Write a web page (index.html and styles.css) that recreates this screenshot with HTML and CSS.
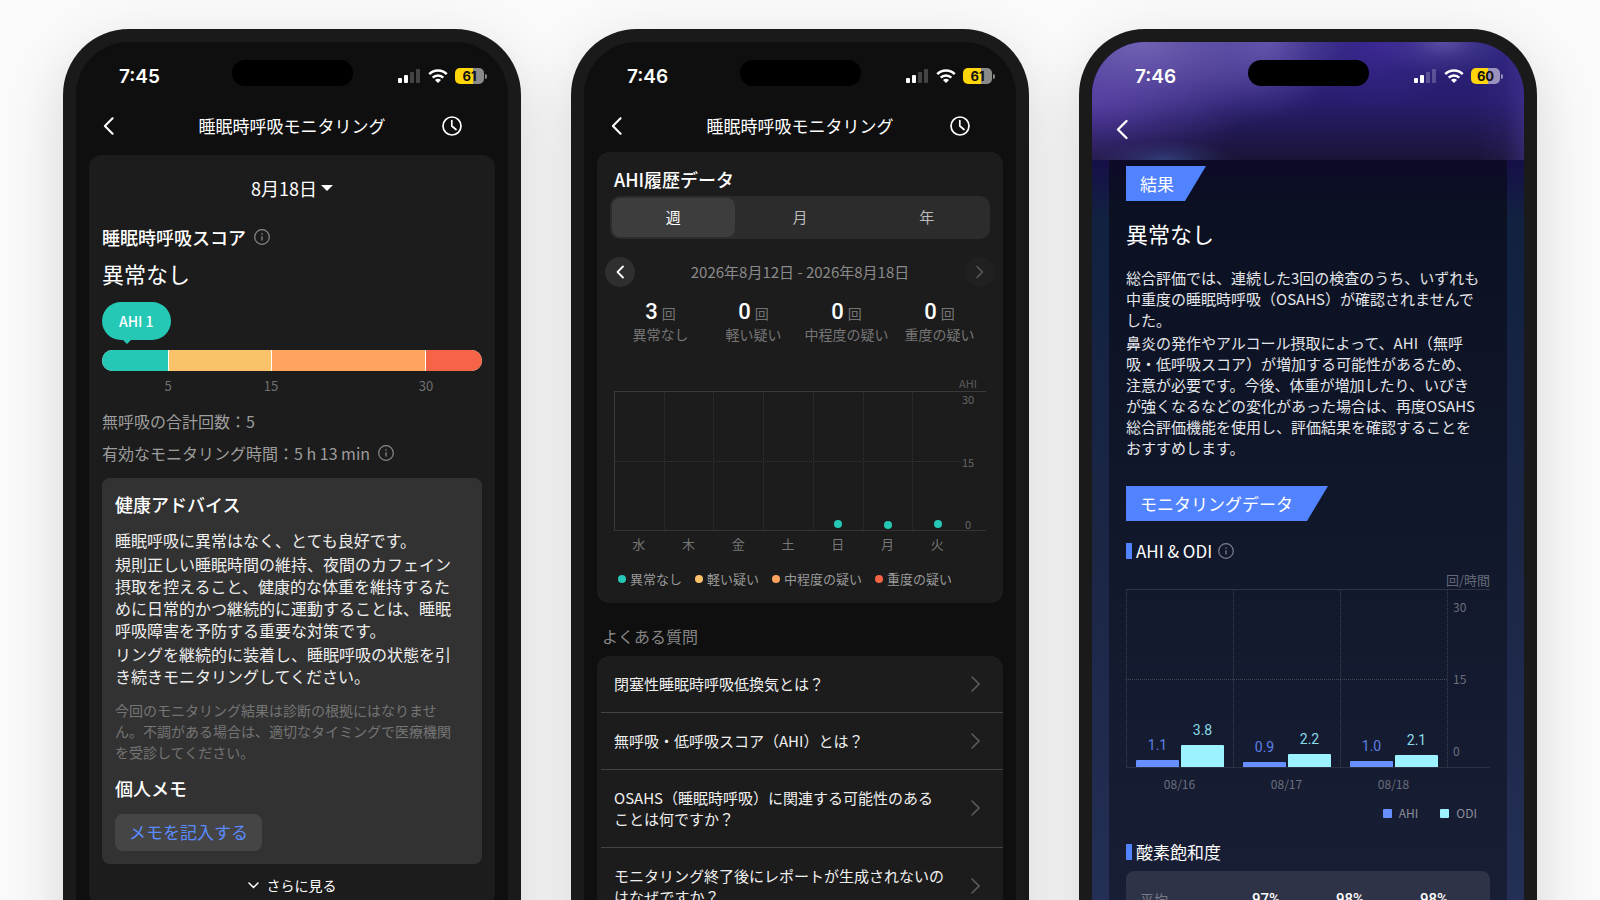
FILE: index.html
```html
<!DOCTYPE html>
<html lang="ja">
<head>
<meta charset="utf-8">
<meta name="viewport" content="width=device-width, initial-scale=1">
<title>睡眠時呼吸モニタリング</title>
<link rel="stylesheet" href="styles.css">
</head>
<body>
<svg class="defs" width="0" height="0" aria-hidden="true">
  <symbol id="signal" viewBox="0 0 23 14">
    <rect x="0" y="9" width="4" height="5" rx="1" fill="#fff"/>
    <rect x="6" y="6" width="4" height="8" rx="1" fill="#fff"/>
    <rect x="12" y="3" width="4" height="11" rx="1" fill="#fff" opacity=".22"/>
    <rect x="18" y="0" width="4" height="14" rx="1" fill="#fff" opacity=".22"/>
  </symbol>
  <symbol id="wifi" viewBox="0 0 20 14">
    <path d="M1.300 5.100a12.300 12.300 0 0 1 17.400 0" fill="none" stroke="#fff" stroke-width="2.700"/>
    <path d="M4.700 8.700a7.500 7.500 0 0 1 10.600 0" fill="none" stroke="#fff" stroke-width="2.600"/>
    <path d="M10 14l-3-3a4.200 4.200 0 0 1 6 0z" fill="#fff"/>
  </symbol>
  <symbol id="back" viewBox="0 0 12 20">
    <path d="M10.500 1.500L2 10l8.500 8.500" fill="none" stroke="currentColor" stroke-width="2.300" stroke-linecap="round" stroke-linejoin="round"/>
  </symbol>
  <symbol id="clock" viewBox="0 0 20 20">
    <circle cx="10" cy="10" r="9" fill="none" stroke="currentColor" stroke-width="1.700"/>
    <path d="M9.800 4.500v5.500l4.200 3.500" fill="none" stroke="currentColor" stroke-width="1.700" stroke-linecap="round" stroke-linejoin="round"/>
  </symbol>
  <symbol id="info" viewBox="0 0 16 16">
    <circle cx="8" cy="8" r="7.300" fill="none" stroke="currentColor" stroke-width="1.200"/>
    <path d="M8 7.200v4.300M8 4.300v1.400" stroke="currentColor" stroke-width="1.300"/>
  </symbol>
  <symbol id="next" viewBox="0 0 9 16">
    <path d="M1 1l7 7-7 7" fill="none" stroke="currentColor" stroke-width="1.600" stroke-linecap="round"/>
  </symbol>
</svg>

<main class="stage">
  <section class="phone">
    <div class="screen">
      <div class="status">
        <span class="time">7:45</span><span class="island"></span>
        <span class="status-icons">
          <svg class="signal"><use href="#signal"/></svg>
          <svg class="wifi"><use href="#wifi"/></svg>
          <span class="battery"><span class="level">61</span></span>
        </span>
      </div>
      <header class="nav">
        <button class="icon-btn" aria-label="戻る"><svg class="back"><use href="#back"/></svg></button>
        <h1>睡眠時呼吸モニタリング</h1>
        <button class="icon-btn end" aria-label="履歴"><svg class="clock"><use href="#clock"/></svg></button>
      </header>

      <div class="card score">
        <button class="date">8月18日<span class="caret"></span></button>
        <h2 class="score-title">睡眠時呼吸スコア<svg class="info"><use href="#info"/></svg></h2>
        <p class="verdict">異常なし</p>
        <span class="bubble">AHI 1</span>
        <div class="scale">
          <span class="ok"></span><span class="mild"></span><span class="mid"></span><span class="severe"></span>
        </div>
        <div class="scale-labels"><span>5</span><span>15</span><span>30</span></div>
        <p class="metric">無呼吸の合計回数：5</p>
        <p class="metric">有効なモニタリング時間：5 h 13 min<svg class="info"><use href="#info"/></svg></p>
        <div class="advice">
          <h3>健康アドバイス</h3>
          <div class="advice-text">
            <p>睡眠呼吸に異常はなく、とても良好です。</p>
            <p>規則正しい睡眠時間の維持、夜間のカフェイン摂取を控えること、健康的な体重を維持するために日常的かつ継続的に運動することは、睡眠呼吸障害を予防する重要な対策です。</p>
            <p>リングを継続的に装着し、睡眠呼吸の状態を引き続きモニタリングしてください。</p>
          </div>
          <p class="note">今回のモニタリング結果は診断の根拠にはなりません。不調がある場合は、適切なタイミングで医療機関を受診してください。</p>
          <h3>個人メモ</h3>
          <button class="memo">メモを記入する</button>
        </div>
        <button class="more"><svg class="down" viewBox="0 0 11 7"><path d="M1 1l4.500 4.500L10 1" fill="none" stroke="currentColor" stroke-width="1.500" stroke-linecap="round"/></svg>さらに見る</button>
      </div>
    </div>
  </section>

  <section class="phone">
    <div class="screen">
      <div class="status">
        <span class="time">7:46</span><span class="island"></span>
        <span class="status-icons">
          <svg class="signal"><use href="#signal"/></svg>
          <svg class="wifi"><use href="#wifi"/></svg>
          <span class="battery"><span class="level">61</span></span>
        </span>
      </div>
      <header class="nav tight">
        <button class="icon-btn" aria-label="戻る"><svg class="back"><use href="#back"/></svg></button>
        <h1>睡眠時呼吸モニタリング</h1>
        <button class="icon-btn end" aria-label="履歴"><svg class="clock"><use href="#clock"/></svg></button>
      </header>

      <div class="card history">
        <h2>AHI履歴データ</h2>
        <div class="segments">
          <button class="active">週</button><button>月</button><button>年</button>
        </div>
        <div class="range">
          <button class="round" aria-label="前の週"><svg class="prev" viewBox="0 0 9 14"><path d="M7 1.500L1.500 7 7 12.500" fill="none" stroke="currentColor" stroke-width="1.800" stroke-linecap="round" stroke-linejoin="round"/></svg></button>
          <span>2026年8月12日 - 2026年8月18日</span>
          <button class="round off" aria-label="次の週"><svg class="prev" viewBox="0 0 9 14"><path d="M2 1.500L7.500 7 2 12.500" fill="none" stroke="currentColor" stroke-width="1.500" stroke-linecap="round" stroke-linejoin="round"/></svg></button>
        </div>
        <dl class="stats">
          <div><dd><b>3</b>回</dd><dt>異常なし</dt></div>
          <div><dd><b>0</b>回</dd><dt>軽い疑い</dt></div>
          <div><dd><b>0</b>回</dd><dt>中程度の疑い</dt></div>
          <div><dd><b>0</b>回</dd><dt>重度の疑い</dt></div>
        </dl>
        <div class="week">
          <div class="week-unit">AHI</div>
          <div class="week-plot">
            <div></div><div></div><div></div><div></div>
            <div><i style="bottom:1.500%"></i></div>
            <div><i style="bottom:1%"></i></div>
            <div><i style="bottom:1.300%"></i></div>
            <div class="week-axis"><span>30</span><span>15</span><span>0</span></div>
          </div>
          <div class="week-days"><span>水</span><span>木</span><span>金</span><span>土</span><span>日</span><span>月</span><span>火</span></div>
        </div>
        <ul class="legend">
          <li class="c-ok">異常なし</li><li class="c-mild">軽い疑い</li><li class="c-mid">中程度の疑い</li><li class="c-severe">重度の疑い</li>
        </ul>
      </div>

      <h2 class="faq-title">よくある質問</h2>
      <div class="card faq">
        <a href="#">閉塞性睡眠時呼吸低換気とは？<svg class="next"><use href="#next"/></svg></a>
        <a href="#">無呼吸・低呼吸スコア（AHI）とは？<svg class="next"><use href="#next"/></svg></a>
        <a href="#">OSAHS（睡眠時呼吸）に関連する可能性のあることは何ですか？<svg class="next"><use href="#next"/></svg></a>
        <a href="#">モニタリング終了後にレポートが生成されないのはなぜですか？<svg class="next"><use href="#next"/></svg></a>
      </div>
    </div>
  </section>

  <section class="phone">
    <div class="screen report">
      <div class="aurora">
        <div class="status">
          <span class="time">7:46</span><span class="island"></span>
          <span class="status-icons">
            <svg class="signal"><use href="#signal"/></svg>
            <svg class="wifi"><use href="#wifi"/></svg>
            <span class="battery"><span class="level">60</span></span>
          </span>
        </div>
        <header class="nav bare">
          <button class="icon-btn" aria-label="戻る"><svg class="back large"><use href="#back"/></svg></button>
        </header>
      </div>

      <div class="panel">
        <h2 class="tag">結果</h2>
        <p class="result">異常なし</p>
        <div class="summary">
          <p>総合評価では、連続した3回の検査のうち、いずれも中重度の睡眠時呼吸（OSAHS）が確認されませんでした。</p>
          <p>鼻炎の発作やアルコール摂取によって、AHI（無呼吸・低呼吸スコア）が増加する可能性があるため、注意が必要です。今後、体重が増加したり、いびきが強くなるなどの変化があった場合は、再度OSAHS総合評価機能を使用し、評価結果を確認することをおすすめします。</p>
        </div>
        <h2 class="tag second">モニタリングデータ</h2>
        <h3 class="mark">AHI &amp; ODI<svg class="info"><use href="#info"/></svg></h3>
        <div class="unit">回/時間</div>
        <div class="bars">
          <div class="bar-col"><div class="bar ahi" style="height:3.700%"><span>1.1</span></div><div class="bar odi" style="height:12.700%"><span>3.8</span></div></div>
          <div class="bar-col"><div class="bar ahi" style="height:3%"><span>0.9</span></div><div class="bar odi" style="height:7.300%"><span>2.2</span></div></div>
          <div class="bar-col"><div class="bar ahi" style="height:3.300%"><span>1.0</span></div><div class="bar odi" style="height:7%"><span>2.1</span></div></div>
          <div class="bar-axis"><span>30</span><span>15</span><span>0</span></div>
        </div>
        <div class="bar-dates"><span>08/16</span><span>08/17</span><span>08/18</span></div>
        <ul class="bar-legend"><li class="l-ahi">AHI</li><li class="l-odi">ODI</li></ul>
        <h3 class="mark">酸素飽和度</h3>
        <table class="spo2">
          <tr><th scope="row">平均</th><td>97%</td><td>98%</td><td>98%</td></tr>
        </table>
      </div>
    </div>
  </section>
</main>
</body>
</html>
```
FILE: styles.css
```css
* { box-sizing: border-box; margin: 0; padding: 0; }

:root {
  --jp: "Noto Sans CJK JP", sans-serif;
  --ok: #25c8b5;
  --mild: #fbc26c;
  --mid: #ffa45f;
  --severe: #f66447;
}

body {
  height: 100vh;
  overflow: hidden;
  background: #fafafa;
  color: #fff;
  font-family: var(--jp);
}

.defs { position: absolute; }
svg { display: block; flex: none; }
button { border: 0; background: none; color: inherit; font: inherit; cursor: pointer; }
h1, h2, h3 { font-weight: 500; }
ul { list-style: none; }

.stage {
  display: grid;
  grid-template-columns: repeat(3, minmax(0, 1fr));
  gap: 50px;
  padding: 29px 63px 0;
}

.phone {
  min-height: 110vh;
  padding: 13px;
  border-radius: 66px;
  background: #1a1a1a;
  box-shadow: 0 20px 60px rgba(0, 0, 0, .15);
}

.screen {
  height: 100%;
  padding: 0 13px;
  border-radius: 53px;
  background: #0f0f0f;
  overflow: hidden;
}

/* Status bar */
.status {
  display: grid;
  grid-template-columns: 1fr 121px 1fr;
  align-items: center;
  height: 68px;
  padding: 0 10px;
}
.time {
  padding: 1px 0 0 20px;
  font: 600 19px/24px Inter, sans-serif;
}
.island {
  align-self: start;
  height: 26px;
  margin-top: 18px;
  border-radius: 13px;
  background: #000;
}
.status-icons { display: flex; align-items: center; justify-content: flex-end; gap: 7px; padding-right: 1px; }
.signal { width: 23px; height: 14px; }
.wifi { width: 20px; height: 14px; }
.battery {
  position: relative;
  width: 29px;
  height: 16px;
  border-radius: 5px;
  background: linear-gradient(90deg, #ffd60a 61%, #8a8a8a 61%);
}
.battery::after {
  content: "";
  position: absolute;
  right: -3px;
  top: 6px;
  width: 2px;
  height: 5px;
  border-radius: 0 2px 2px 0;
  background: #8a8a8a;
}
.report .battery { background: linear-gradient(90deg, #ffd60a 60%, #9a92bd 60%); }
.report .battery::after { background: #9a92bd; }
.level {
  display: block;
  color: #111;
  text-align: center;
  font: 700 13px/16px Inter, sans-serif;
}

/* Title bar */
.nav {
  display: grid;
  grid-template-columns: 60px 1fr 60px;
  align-items: center;
  height: 31px;
  margin-bottom: 14px;
}
.nav.tight { margin-bottom: 11px; }
.nav h1 { font-size: 17px; line-height: 26px; text-align: center; font-weight: 400; }
.icon-btn { padding-left: 14px; justify-self: start; }
.icon-btn.end { padding: 0 33px 0 0; justify-self: end; }
.back { width: 11px; height: 18px; }
.back.large { width: 12px; height: 21px; }
.clock { width: 20px; height: 20px; }

.card { border-radius: 12px; background: #1c1c1c; }
.info { width: 16px; height: 16px; color: #8a8a8a; }

/* Score card */
.score { padding: 19px 13px 11px; }
.date {
  display: flex;
  align-items: center;
  gap: 4px;
  margin: 0 auto 21px;
  font-size: 18px;
  line-height: 28px;
}
.caret { border: 6px solid transparent; border-top-color: #fff; border-bottom: 0; }
.score-title { display: flex; align-items: center; gap: 8px; font-size: 18px; line-height: 28px; }
.verdict { margin: 6px 0 13px; font-size: 22px; line-height: 32px; }
.bubble {
  position: relative;
  display: block;
  width: max-content;
  padding: 0 17px;
  border-radius: 19px;
  background: var(--ok);
  font-size: 14px;
  line-height: 38px;
  font-weight: 500;
}
.bubble::after {
  content: "";
  position: absolute;
  left: 20px;
  top: 37px;
  border: 5px solid transparent;
  border-top-color: var(--ok);
  border-bottom: 0;
}
.scale {
  display: grid;
  grid-template-columns: 66fr 102fr 154fr 56fr;
  gap: 1px;
  height: 21px;
  margin-top: 10px;
  border-radius: 11px;
  background: #fff;
  overflow: hidden;
}
.ok { background: var(--ok); }
.mild { background: var(--mild); }
.mid { background: var(--mid); }
.severe { background: var(--severe); }
.scale-labels {
  display: grid;
  grid-template-columns: 132fr 74fr 236fr;
  margin: 5px -62px 13px 0;
  color: #707070;
  font-size: 13px;
  line-height: 20px;
  text-align: center;
}
.metric {
  display: flex;
  align-items: center;
  gap: 8px;
  margin-top: 8px;
  color: #9c9c9c;
  font-size: 16px;
  line-height: 24px;
}
.advice {
  margin: 13px 0 11px;
  padding: 13px;
  border-radius: 8px;
  background: #323232;
}
.advice h3 { font-size: 18px; line-height: 26px; }
.advice-text {
  display: grid;
  gap: 2px;
  margin: 12px 0 13px;
  padding-right: 8px;
  color: #eee;
  font-size: 16px;
  line-height: 22px;
}
.note { margin-bottom: 12px; padding-right: 8px; color: #757575; font-size: 14px; line-height: 21px; }
.memo {
  display: block;
  margin-top: 13px;
  padding: 0 14px 2px;
  border-radius: 8px;
  background: #454545;
  color: #5b8cff;
  font-size: 17px;
  line-height: 35px;
}
.more { display: flex; align-items: center; gap: 8px; margin: 0 auto; font-size: 14px; line-height: 20px; }
.down { width: 11px; height: 7px; }

/* History card */
.history { padding: 14px 13px 15px; }
.history h2 { padding-left: 4px; font-size: 18px; line-height: 26px; }
.segments {
  display: grid;
  grid-template-columns: repeat(3, 1fr);
  gap: 4px;
  margin-top: 4px;
  padding: 2px;
  border-radius: 10px;
  background: #2c2c2c;
}
.segments button { padding-bottom: 2px; border-radius: 8px; color: #bbb; font-size: 15px; line-height: 37px; }
.segments .active { background: #3d3d3d; color: #fff; }
.range {
  display: flex;
  align-items: center;
  justify-content: space-between;
  margin: 18px -5px 12px;
  color: #8a8a8a;
  font-size: 15px;
  line-height: 24px;
}
.round {
  display: grid;
  place-items: center;
  width: 30px;
  height: 30px;
  border-radius: 50%;
  background: #2f2f2f;
  color: #fff;
}
.round.off { background: #202020; color: #5c5c5c; }
.prev { width: 9px; height: 14px; }
.stats {
  display: grid;
  grid-template-columns: repeat(4, 1fr);
  padding: 0 4px;
  color: #757575;
  font-size: 14px;
  line-height: 19px;
  text-align: center;
  white-space: nowrap;
}
.stats div { display: flex; flex-direction: column; align-items: center; }
.stats dd { display: flex; align-items: baseline; gap: 4px; height: 26px; line-height: 20px; }
.stats b { color: #fff; font: 500 22px/26px Roboto, sans-serif; }

.week { margin: 31px 4px 17px; }
.week-unit { padding-right: 9px; color: #5e5e5e; font-size: 11px; line-height: 16px; text-align: right; }
.week-plot {
  position: relative;
  display: grid;
  grid-template-columns: repeat(7, 1fr) 24px;
  height: 140px;
  border-top: 1px solid #3a3a3a;
  border-bottom: 1px solid #333;
}
.week-plot::after {
  content: "";
  position: absolute;
  left: 0;
  right: 24px;
  top: 50%;
  border-top: 1px dotted #363636;
}
.week-plot > div { position: relative; border-left: 1px dotted #333; }
.week-plot > div:first-child { border-left: 1px solid #3a3a3a; }
.week-plot i {
  position: absolute;
  left: 50%;
  width: 8px;
  height: 8px;
  margin-left: -4px;
  border-radius: 50%;
  background: var(--ok);
}
.week-plot > .week-axis {
  display: flex;
  flex-direction: column;
  justify-content: space-between;
  border: 0;
  padding-top: 1px;
  color: #666;
  font-size: 11px;
  line-height: 12px;
  text-align: center;
}
.week-axis span { margin: 0 8px 0 -4px; }
.week-days {
  display: grid;
  grid-template-columns: repeat(7, 1fr);
  margin: 4px 24px 0 0;
  color: #777;
  font-size: 13px;
  line-height: 18px;
  text-align: center;
}
.legend { display: flex; gap: 13px; padding-left: 8px; color: #999; font-size: 13px; line-height: 18px; }
.legend li { display: flex; align-items: center; gap: 4px; white-space: nowrap; }
.legend li::before { content: ""; width: 8px; height: 8px; border-radius: 50%; background: var(--dot); }
.c-ok { --dot: var(--ok); }
.c-mild { --dot: var(--mild); }
.c-mid { --dot: var(--mid); }
.c-severe { --dot: var(--severe); }

.faq-title { margin: 21px 5px 8px; color: #858585; font-size: 16px; line-height: 24px; font-weight: 400; }
.faq { padding-left: 4px; }
.faq a {
  display: flex;
  align-items: center;
  justify-content: space-between;
  gap: 25px;
  padding: 17px 23px 18px 13px;
  border-bottom: 1px solid #444;
  color: #f0f0f0;
  font-size: 15px;
  line-height: 21px;
  text-decoration: none;
}
.faq a:last-child { border: 0; }
.next { width: 9px; height: 16px; color: #5a5a5a; }

/* Report */
.report {
  padding: 0;
  background: linear-gradient(180deg, #150f48 118px, #122140 175px, #1b2645 500px, #232f55 860px);
}
.aurora {
  height: 118px;
  background:
    radial-gradient(70px 20px at 74px 118px, rgba(60, 85, 155, .6), rgba(60, 85, 155, .22) 50%, transparent),
    radial-gradient(210px 100px at 50px 0, rgba(135, 118, 196, .75), rgba(125, 105, 190, .38) 50%, rgba(125, 105, 190, .1) 80%, transparent),
    radial-gradient(90px 80px at 175px 0, rgba(115, 98, 190, .6), rgba(115, 98, 190, .22) 50%, rgba(115, 98, 190, .06) 80%, transparent),
    radial-gradient(80px 70px at 285px 0, rgba(72, 44, 165, .6), rgba(72, 44, 165, .2) 50%, transparent),
    radial-gradient(70px 34px at 350px 0, rgba(120, 110, 190, .6), rgba(120, 110, 190, .2) 50%, transparent),
    linear-gradient(270deg, rgba(80, 62, 165, .45), rgba(80, 62, 165, .12) 20px, transparent 50px),
    radial-gradient(150px 100px at 0 60px, rgba(92, 62, 175, .65), rgba(92, 62, 175, .25) 50%, transparent),
    linear-gradient(180deg, #2c237c, #271d6e 50%, #1a1436);
}
.aurora .status { padding: 0 23px; }
.nav.bare { height: 39px; margin: 0; }
.nav.bare .icon-btn { padding-left: 24px; }
.panel {
  height: 100%;
  margin: 0 17px;
  padding: 6px 17px 0;
  background: linear-gradient(180deg, #0d0a28, #0b1121 55px, #10172a 330px, #181e35 740px);
}
.tag {
  width: max-content;
  padding: 0 32px 0 14px;
  background: #5283ff;
  clip-path: polygon(0 0, 100% 0, calc(100% - 21px) 100%, 0 100%);
  font-size: 17px;
  line-height: 35px;
  font-weight: 400;
}
.tag.second { padding-right: 35px; }
.result { margin: 16px 0 18px; font-size: 22px; line-height: 32px; }
.summary {
  display: grid;
  gap: 2px;
  margin-bottom: 28px;
  padding-right: 8px;
  color: #e3e5ea;
  font-size: 15px;
  line-height: 21px;
}
.mark { display: flex; align-items: center; margin-top: 17px; font-size: 17px; line-height: 26px; font-weight: 400; }
.mark::before { content: ""; width: 6px; height: 16px; margin-right: 4px; background: #5283ff; }
.mark .info { margin-left: 6px; color: #7c808c; }
.unit { margin-top: 7px; color: #656977; font-size: 13px; line-height: 18px; text-align: right; }
.bars {
  position: relative;
  display: grid;
  grid-template-columns: repeat(3, 1fr) 43px;
  height: 179px;
  border-top: 1px solid #2f3445;
  border-bottom: 1px solid #2b3042;
}
.bars::before {
  content: "";
  position: absolute;
  left: 0;
  right: 43px;
  top: 50%;
  border-top: 1px dotted #454a5a;
}
.bar-col, .bar-axis { border-left: 1px dotted #3d4252; }
.bar-col { display: flex; align-items: flex-end; gap: 2px; padding: 0 9px; }
.bar { position: relative; flex: 1; border-radius: 1px 1px 0 0; }
.bar span {
  position: absolute;
  left: 0;
  right: 0;
  bottom: 100%;
  margin-bottom: 6px;
  font: 400 14px/18px Roboto, sans-serif;
  text-align: center;
}
.ahi { background: #6690ff; color: #5c80e6; }
.odi { background: #9cf2ff; color: #8adbe8; }
.bar-axis {
  display: flex;
  flex-direction: column;
  justify-content: space-between;
  padding: 8px 0 7px 5px;
  color: #6c707d;
  font-size: 12px;
  line-height: 18px;
}
.bar-dates {
  display: grid;
  grid-template-columns: repeat(3, 1fr);
  margin: 7px 43px 11px 0;
  color: #6c707d;
  font-size: 12px;
  line-height: 18px;
  text-align: center;
}
.bar-legend { display: flex; justify-content: flex-end; gap: 22px; padding-right: 13px; color: #8b8e99; font-size: 12px; line-height: 18px; }
.bar-legend li { display: flex; align-items: center; gap: 7px; }
.bar-legend li::before { content: ""; width: 9px; height: 9px; border-radius: 1px; background: #6690ff; }
.bar-legend .l-odi::before { background: #9cf2ff; }
.spo2 {
  width: 100%;
  margin-top: 6px;
  padding: 18px 14px;
  border-radius: 8px;
  border-spacing: 0;
  background: #2e3347;
  table-layout: fixed;
  font: 500 15px/20px Roboto, sans-serif;
}
.spo2 td { text-align: center; }
.spo2 th { color: #757988; font: 400 14px/20px var(--jp); text-align: left; }
```
